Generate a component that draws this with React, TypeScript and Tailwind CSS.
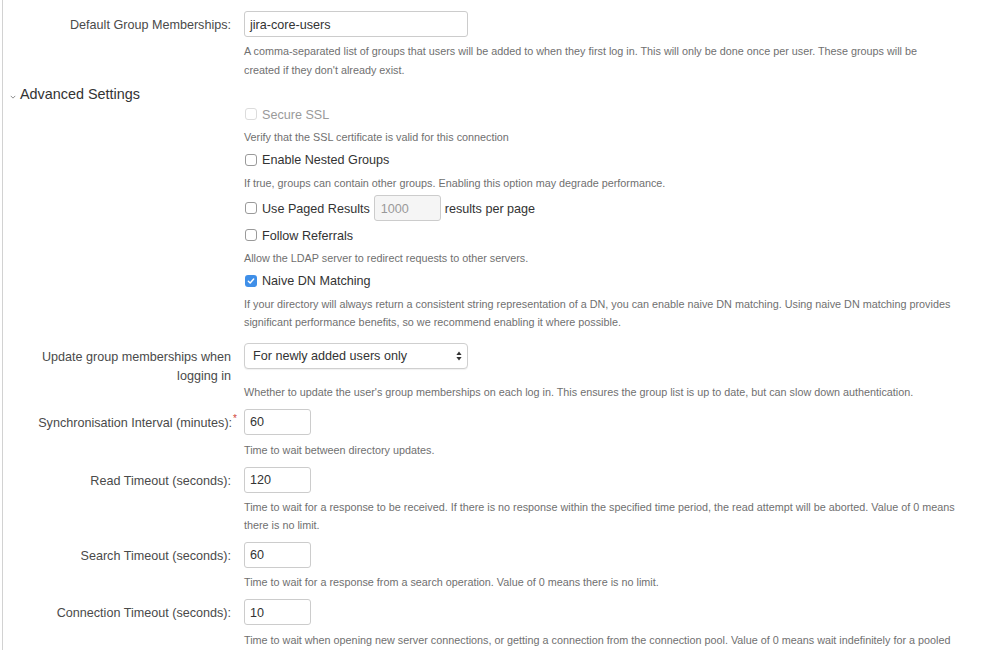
import React from "react";

const font = { fontFamily: '"Liberation Sans", Arial, Helvetica, sans-serif' };

function Label({ children, required }: { children: React.ReactNode; required?: boolean }) {
  return (
    <div className="w-[228px] shrink-0 pl-[28px] pt-[5px] text-right text-[12.6px] leading-[19px] text-[#4a4a4a]">
      {children}
      {required && <sup className="-mr-[6px] ml-[1px] text-[10px] text-[#d04437]">*</sup>}
    </div>
  );
}

function Desc({ children, className = "" }: { children: React.ReactNode; className?: string }) {
  return (
    <div className={`whitespace-nowrap pt-[1px] text-[10.8px] leading-[18.5px] text-[#707070] ${className}`}>
      {children}
    </div>
  );
}

function TextBox({ value, wide }: { value: string; wide?: boolean }) {
  return (
    <div
      className={`flex h-[26px] items-center rounded-[3px] border border-[#cccccc] bg-white pl-[5px] pt-[2px] text-[12.6px] text-[#333] ${
        wide ? "w-[224px]" : "w-[67px]"
      }`}
    >
      {value}
    </div>
  );
}

function Checkbox({ checked, disabled }: { checked?: boolean; disabled?: boolean }) {
  if (checked) {
    return (
      <span className="ml-[1px] flex h-[12px] w-[12px] items-center justify-center rounded-[3px] bg-[#3f8fe8]">
        <svg viewBox="0 0 12 12" className="h-[10px] w-[10px]">
          <path d="M2.8 6.2 L5 8.3 L9.2 3.6" fill="none" stroke="#fff" strokeWidth="1.7" strokeLinecap="round" strokeLinejoin="round" />
        </svg>
      </span>
    );
  }
  return (
    <span
      className={`ml-[1px] block h-[12px] w-[12px] rounded-[3px] border bg-white ${
        disabled ? "border-[#dcdcdc]" : "border-[#9a9a9a]"
      }`}
    />
  );
}

function CheckRow({
  label,
  checked,
  disabled,
  className = "",
}: {
  label: string;
  checked?: boolean;
  disabled?: boolean;
  className?: string;
}) {
  return (
    <div className={`flex h-[20px] items-center gap-[5px] text-[12.6px] ${disabled ? "text-[#9a9a9a]" : "text-[#333]"} ${className}`}>
      <Checkbox checked={checked} disabled={disabled} />
      <span className="pt-[2px]">{label}</span>
    </div>
  );
}

export default function App() {
  return (
    <div className="h-[650px] overflow-hidden bg-white" style={font}>
      <div className="ml-[2px] h-full border-l border-[#d2d2d2] pt-[11px]">
        {/* Default Group Memberships */}
        <div className="flex">
          <Label>Default Group Memberships:</Label>
          <div className="ml-[13px]">
            <TextBox value="jira-core-users" wide />
            <Desc className="mt-[4px]">
              A comma-separated list of groups that users will be added to when they first log in. This will only be done once per user. These groups will be
              <br />
              created if they don't already exist.
            </Desc>
          </div>
        </div>

        {/* Advanced Settings */}
        <div className="mt-[4px] flex h-[20px] items-center pl-[7px] text-[14.4px] text-[#333]">
          <svg viewBox="0 0 8 5" className="mr-[4px] mt-[8px] h-[4px] w-[6px]">
            <path d="M1 1 L4 4 L7 1" fill="none" stroke="#777" strokeWidth="1.1" />
          </svg>
          <span className="pt-[4px]">Advanced Settings</span>
        </div>

        <div className="ml-[241px]">
          <CheckRow label="Secure SSL" disabled className="mt-[1px]" />
          <Desc className="mt-[3px]">Verify that the SSL certificate is valid for this connection</Desc>

          <CheckRow label="Enable Nested Groups" className="mt-[3px]" />
          <Desc className="mt-[3px]">If true, groups can contain other groups. Enabling this option may degrade performance.</Desc>

          <div className="mt-[3px] flex h-[26px] items-center text-[12.6px] text-[#333]">
            <Checkbox />
            <span className="ml-[5px] pt-[2px]">Use Paged Results</span>
            <div className="ml-[4px] flex h-[26px] w-[67px] items-center rounded-[3px] border border-[#cccccc] bg-[#f5f5f5] pl-[6px] pt-[2px] text-[#999]">
              1000
            </div>
            <span className="ml-[4px] pt-[2px]">results per page</span>
          </div>

          <CheckRow label="Follow Referrals" className="mt-[4px]" />
          <Desc className="mt-[3px]">Allow the LDAP server to redirect requests to other servers.</Desc>

          <CheckRow label="Naive DN Matching" checked className="mt-[3px]" />
          <Desc className="mt-[3px]">
            If your directory will always return a consistent string representation of a DN, you can enable naive DN matching. Using naive DN matching provides
            <br />
            significant performance benefits, so we recommend enabling it where possible.
          </Desc>
        </div>

        {/* Update group memberships */}
        <div className="mt-[11px] flex">
          <Label>Update group memberships when logging in</Label>
          <div className="ml-[13px]">
            <div className="flex h-[26px] w-[224px] items-center justify-between rounded-[4px] border border-[#cfcfcf] bg-white pl-[8px] pr-[5px] text-[12.6px] text-[#333] shadow-[0_1px_1px_rgba(0,0,0,0.06)]">
              <span className="pt-[2px]">For newly added users only</span>
              <svg viewBox="0 0 6 10" className="h-[10px] w-[6px]">
                <path d="M3 0.5 L5.6 4 L0.4 4 Z" fill="#333" />
                <path d="M3 9.5 L5.6 6 L0.4 6 Z" fill="#333" />
              </svg>
            </div>
            <Desc className="mt-[13px]">
              Whether to update the user's group memberships on each log in. This ensures the group list is up to date, but can slow down authentication.
            </Desc>
          </div>
        </div>

        {/* Synchronisation Interval */}
        <div className="mt-[7.5px] flex">
          <Label required>Synchronisation Interval (minutes):</Label>
          <div className="ml-[13px]">
            <TextBox value="60" />
            <Desc className="mt-[5px]">Time to wait between directory updates.</Desc>
          </div>
        </div>

        {/* Read Timeout */}
        <div className="mt-[7.5px] flex">
          <Label>Read Timeout (seconds):</Label>
          <div className="ml-[13px]">
            <TextBox value="120" />
            <Desc className="mt-[4px]">
              Time to wait for a response to be received. If there is no response within the specified time period, the read attempt will be aborted. Value of 0 means
              <br />
              there is no limit.
            </Desc>
          </div>
        </div>

        {/* Search Timeout */}
        <div className="mt-[7px] flex">
          <Label>Search Timeout (seconds):</Label>
          <div className="ml-[13px]">
            <TextBox value="60" />
            <Desc className="mt-[4px]">Time to wait for a response from a search operation. Value of 0 means there is no limit.</Desc>
          </div>
        </div>

        {/* Connection Timeout */}
        <div className="mt-[8px] flex">
          <Label>Connection Timeout (seconds):</Label>
          <div className="ml-[13px]">
            <TextBox value="10" />
            <Desc className="mt-[4.5px]">
              Time to wait when opening new server connections, or getting a connection from the connection pool. Value of 0 means wait indefinitely for a pooled
            </Desc>
          </div>
        </div>
      </div>
    </div>
  );
}
